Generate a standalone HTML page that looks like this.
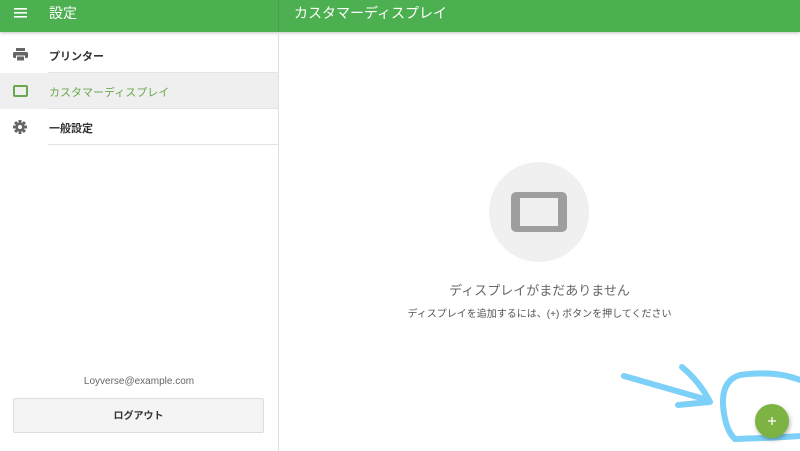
<!DOCTYPE html>
<html><head><meta charset="utf-8"><style>
*{margin:0;padding:0;box-sizing:border-box}
body{width:800px;height:451px;overflow:hidden;background:#fff;font-family:"Liberation Sans","Noto Sans CJK JP",sans-serif;position:relative}
.hdr{position:absolute;left:0;top:0;width:800px;height:32px;background:#4caf50;box-shadow:0 1px 3px rgba(0,0,0,.25)}
.hdr .div{position:absolute;left:278px;top:0;width:1px;height:32px;background:#43a047}
.t{position:absolute;color:#fff;font-size:14px;top:3px}
.side{position:absolute;left:278px;top:32px;width:1px;height:419px;background:#e0e0e0}
.row{position:absolute;left:0;width:278px;height:36px}
.row span{position:absolute;left:49px;top:11px;font-size:11px;color:#333;font-weight:bold}
.row .ln{position:absolute;left:48px;right:0;bottom:0;height:1px;background:#e4e4e4}
.ico{position:absolute;left:13px;top:11px}
</style></head><body>
<div class="hdr"><div class="div"></div>
<svg style="position:absolute;left:14px;top:7px" width="13" height="12"><rect y="1" width="13" height="1.6" fill="#fff"/><rect y="5" width="13" height="1.6" fill="#fff"/><rect y="9" width="13" height="1.6" fill="#fff"/></svg>
<div class="t" style="left:49px">設定</div>
<div class="t" style="left:294px">カスタマーディスプレイ</div>
</div>
<div class="side"></div>
<div class="row" style="top:37px"><svg class="ico" width="15" height="14" viewBox="0 0 15 14"><rect x="3" y="0" width="9" height="3" fill="#666"/><rect x="0" y="4" width="15" height="6" rx="1.5" fill="#666"/><rect x="3.5" y="8" width="8" height="5" fill="#666" stroke="#fff" stroke-width="1"/></svg><span>プリンター</span><div class="ln"></div></div>
<div class="row" style="top:73px;background:#efefef"><svg class="ico" width="15" height="12" viewBox="0 0 15 12" style="top:12px"><rect x="1" y="1" width="13" height="10" rx="1" fill="none" stroke="#6aa84f" stroke-width="2"/></svg><span style="color:#6aa84f;font-weight:normal">カスタマーディスプレイ</span><div class="ln"></div></div>
<div class="row" style="top:109px"><svg class="ico" width="14" height="14" viewBox="0 0 14 14" style="top:11px"><g fill="#666"><circle cx="7" cy="7" r="4.5"/><rect x="5.5" y="0" width="3" height="14"/><rect x="0" y="5.5" width="14" height="3"/><rect x="5.5" y="0" width="3" height="14" transform="rotate(45 7 7)"/><rect x="5.5" y="0" width="3" height="14" transform="rotate(-45 7 7)"/></g><circle cx="7" cy="7" r="2" fill="#fff"/></svg><span>一般設定</span><div class="ln"></div></div>
<div style="position:absolute;left:0;width:278px;top:376px;text-align:center;font-size:10px;color:#666">Loyverse@example.com</div>
<div style="position:absolute;left:13px;top:398px;width:251px;height:35px;background:#f4f4f4;border:1px solid #ddd;border-radius:2px;text-align:center;line-height:35px;font-size:10px;color:#333;font-weight:bold">ログアウト</div>
<div style="position:absolute;left:489px;top:162px;width:100px;height:100px;border-radius:50%;background:#f0f0f0"></div>
<div style="position:absolute;left:511px;top:192px;width:56px;height:40px;border-radius:5px;background:#9e9e9e"></div>
<div style="position:absolute;left:520px;top:198px;width:38px;height:28px;background:#f0f0f0"></div>
<div style="position:absolute;left:279px;width:521px;top:280px;text-align:center;font-size:13px;color:#666">ディスプレイがまだありません</div>
<div style="position:absolute;left:279px;width:521px;top:305px;text-align:center;font-size:10px;color:#555">ディスプレイを追加するには、(+) ボタンを押してください</div>
<svg style="position:absolute;left:600px;top:350px" width="200" height="101" viewBox="0 0 200 101">
<g fill="none" stroke="#7dd0f7" stroke-width="6" stroke-linecap="round" stroke-linejoin="round">
<path d="M24 26 L108 50"/><path d="M82 17 Q100 32 110 52 L78 55"/>
<path d="M200 30 Q175 20 140 25 Q122 30 123 55 Q125 80 135 89 Q170 88 200 86"/>
</g>
<circle cx="172" cy="71" r="17" fill="#7cb342" style="filter:drop-shadow(1px 2px 2px rgba(0,0,0,.3))"/>
<path d="M172 67v8M168 71h8" stroke="#fff" stroke-width="1.3"/>
</svg>
</body></html>
